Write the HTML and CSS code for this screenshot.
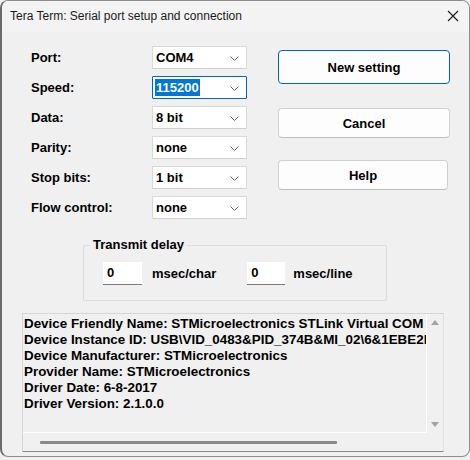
FILE: index.html
```html
<!DOCTYPE html>
<html>
<head>
<meta charset="utf-8">
<link rel="stylesheet" href="styles.css">
</head>
<body>
<div class="window">
  <div class="titlebar">
    <span class="title">Tera Term: Serial port setup and connection</span>
    <svg class="close" width="12" height="12" viewBox="0 0 12 12"><path d="M1 1 L11 11 M11 1 L1 11" stroke="#1a1a1a" stroke-width="1.1" fill="none"/></svg>
  </div>
  <div class="content">
    <div class="top">
      <div class="fields">
        <label class="lbl">Port:</label>
        <div class="select"><span class="val">COM4</span><svg class="chev" width="9" height="5" viewBox="0 0 9 5"><path d="M0.5 0.5 L4.5 4.5 L8.5 0.5" stroke="#606060" fill="none"/></svg></div>
        <label class="lbl">Speed:</label>
        <div class="select focus"><span class="val sel">115200</span><svg class="chev" width="9" height="5" viewBox="0 0 9 5"><path d="M0.5 0.5 L4.5 4.5 L8.5 0.5" stroke="#606060" fill="none"/></svg></div>
        <label class="lbl">Data:</label>
        <div class="select"><span class="val">8 bit</span><svg class="chev" width="9" height="5" viewBox="0 0 9 5"><path d="M0.5 0.5 L4.5 4.5 L8.5 0.5" stroke="#606060" fill="none"/></svg></div>
        <label class="lbl">Parity:</label>
        <div class="select"><span class="val">none</span><svg class="chev" width="9" height="5" viewBox="0 0 9 5"><path d="M0.5 0.5 L4.5 4.5 L8.5 0.5" stroke="#606060" fill="none"/></svg></div>
        <label class="lbl">Stop bits:</label>
        <div class="select"><span class="val">1 bit</span><svg class="chev" width="9" height="5" viewBox="0 0 9 5"><path d="M0.5 0.5 L4.5 4.5 L8.5 0.5" stroke="#606060" fill="none"/></svg></div>
        <label class="lbl">Flow control:</label>
        <div class="select"><span class="val">none</span><svg class="chev" width="9" height="5" viewBox="0 0 9 5"><path d="M0.5 0.5 L4.5 4.5 L8.5 0.5" stroke="#606060" fill="none"/></svg></div>
      </div>
      <div class="buttons">
        <div class="btn default">New setting</div>
        <div class="btn cancel">Cancel</div>
        <div class="btn help">Help</div>
      </div>
    </div>
    <div class="delay">
      <div class="legend">Transmit delay</div>
      <div class="delay-row">
        <div class="num">0</div><span class="unit">msec/char</span>
        <div class="num num2">0</div><span class="unit unit2">msec/line</span>
      </div>
    </div>
    <div class="info">
      <div class="info-main">
        <div class="text">
          <div class="line">Device Friendly Name: STMicroelectronics STLink Virtual COM Port (COM4)</div>
          <div class="line">Device Instance ID: USB\VID_0483&amp;PID_374B&amp;MI_02\6&amp;1EBE2F0&amp;0&amp;0002</div>
          <div class="line">Device Manufacturer: STMicroelectronics</div>
          <div class="line">Provider Name: STMicroelectronics</div>
          <div class="line">Driver Date: 6-8-2017</div>
          <div class="line">Driver Version: 2.1.0.0</div>
        </div>
        <div class="vscroll">
          <svg width="8" height="5" viewBox="0 0 8 5"><path d="M0 5 L4 0 L8 5 Z" fill="#a3a3a3"/></svg>
          <svg width="8" height="5" viewBox="0 0 8 5"><path d="M0 0 L8 0 L4 5 Z" fill="#a3a3a3"/></svg>
        </div>
      </div>
      <div class="hscroll"><div class="thumb"></div></div>
    </div>
  </div>
</div>
</body>
</html>
```
FILE: styles.css
```css
html, body { margin: 0; padding: 0; background: #f0f0f0; }
.window {
  width: 467px;
  height: 455px;
  border: 1px solid #8c8c8c;
  border-left: 2px solid #6a6a6a;
  border-radius: 8px;
  background: #f0f0f0;
  overflow: hidden;
  box-sizing: content-box;
}
.titlebar {
  height: 31px;
  background: #f3f3f3;
  display: flex;
  align-items: center;
  justify-content: space-between;
  padding: 0 9px 0 8px;
  box-sizing: border-box;
}
.title {
  font-family: "Liberation Sans", Arial, sans-serif;
  font-size: 12px;
  color: #1a1a1a;
  padding-bottom: 1px;
}
.close { margin-right: 1px; margin-bottom: 1px; }
.content {
  font-family: "Liberation Sans", Arial, sans-serif;
  font-weight: bold;
  font-size: 13px;
  color: #000;
}
.top {
  display: flex;
  padding-top: 14px;
  padding-left: 29px;
}
.fields {
  display: grid;
  grid-template-columns: 121px 95px;
  grid-auto-rows: 23px;
  row-gap: 7px;
  align-items: center;
}
.lbl { line-height: 23px; }
.select {
  height: 23px;
  box-sizing: border-box;
  background: #fff;
  border: 1px solid #d9d9d9;
  border-bottom-color: #cfcfcf;
  border-radius: 1px;
  display: flex;
  align-items: center;
  justify-content: space-between;
  padding: 0 7px 0 2px;
}
.select.focus { border-color: #0067c0; }
.val { padding: 0 1px; line-height: 17px; }
.val.sel { background: #0078d7; color: #fff; }
.chev { margin-top: 1px; }
.buttons {
  display: flex;
  flex-direction: column;
  margin-left: 31px;
  padding-top: 4px;
}
.btn {
  width: 172px;
  box-sizing: border-box;
  background: #fdfdfd;
  border: 1px solid #d0d0d0;
  border-bottom-color: #bcbcbc;
  border-radius: 4px;
  display: flex;
  align-items: center;
  justify-content: center;
}
.btn.default { height: 34px; border: 1px solid #0067c0; }
.btn.cancel { height: 30px; margin-top: 24px; }
.btn.help { height: 30px; margin-top: 22px; width: 170px; }
.delay {
  margin-left: 81px;
  margin-top: 26px;
  width: 304px;
  height: 56px;
  box-sizing: border-box;
  border: 1px solid #dcdcdc;
  border-radius: 2px;
  position: relative;
}
.legend {
  position: absolute;
  top: -9px;
  left: 6px;
  padding: 0 3px;
  background: #f0f0f0;
  line-height: 16px;
}
.delay-row {
  display: flex;
  align-items: center;
  padding-top: 16px;
  padding-left: 19px;
}
.num {
  width: 39px;
  height: 23px;
  box-sizing: border-box;
  background: #fff;
  border-bottom: 1px solid #7a7a7a;
  padding-left: 4px;
  line-height: 22px;
}
.unit { margin-left: 10px; }
.num2 { margin-left: 31px; width: 38px; }
.unit.unit2 { margin-left: 8px; }
.info {
  margin-left: 20px;
  margin-top: 12px;
  width: 422px;
  height: 139px;
  box-sizing: border-box;
  border: 1px solid #d5d5d5;
  border-bottom-color: #8a8a8a;
  border-right-color: #e0e0e0;
  display: flex;
  flex-direction: column;
}
.info-main {
  display: flex;
  height: 119px;
}
.text {
  width: 404px;
  overflow: hidden;
  white-space: nowrap;
  border-right: 1px solid #fff;
  border-bottom: 1px solid #fff;
  padding: 2px 0 0 1px;
  box-sizing: border-box;
  line-height: 16px;
  font-size: 13.4px;
}
.vscroll {
  flex: 1;
  display: flex;
  flex-direction: column;
  justify-content: space-between;
  align-items: center;
  padding: 6px 0 6px;
}
.hscroll {
  flex: 1;
  display: flex;
  align-items: center;
  padding-left: 17px;
}
.thumb {
  width: 297px;
  height: 3px;
  background: #8a8a8a;
  border-radius: 1px;
}
```
